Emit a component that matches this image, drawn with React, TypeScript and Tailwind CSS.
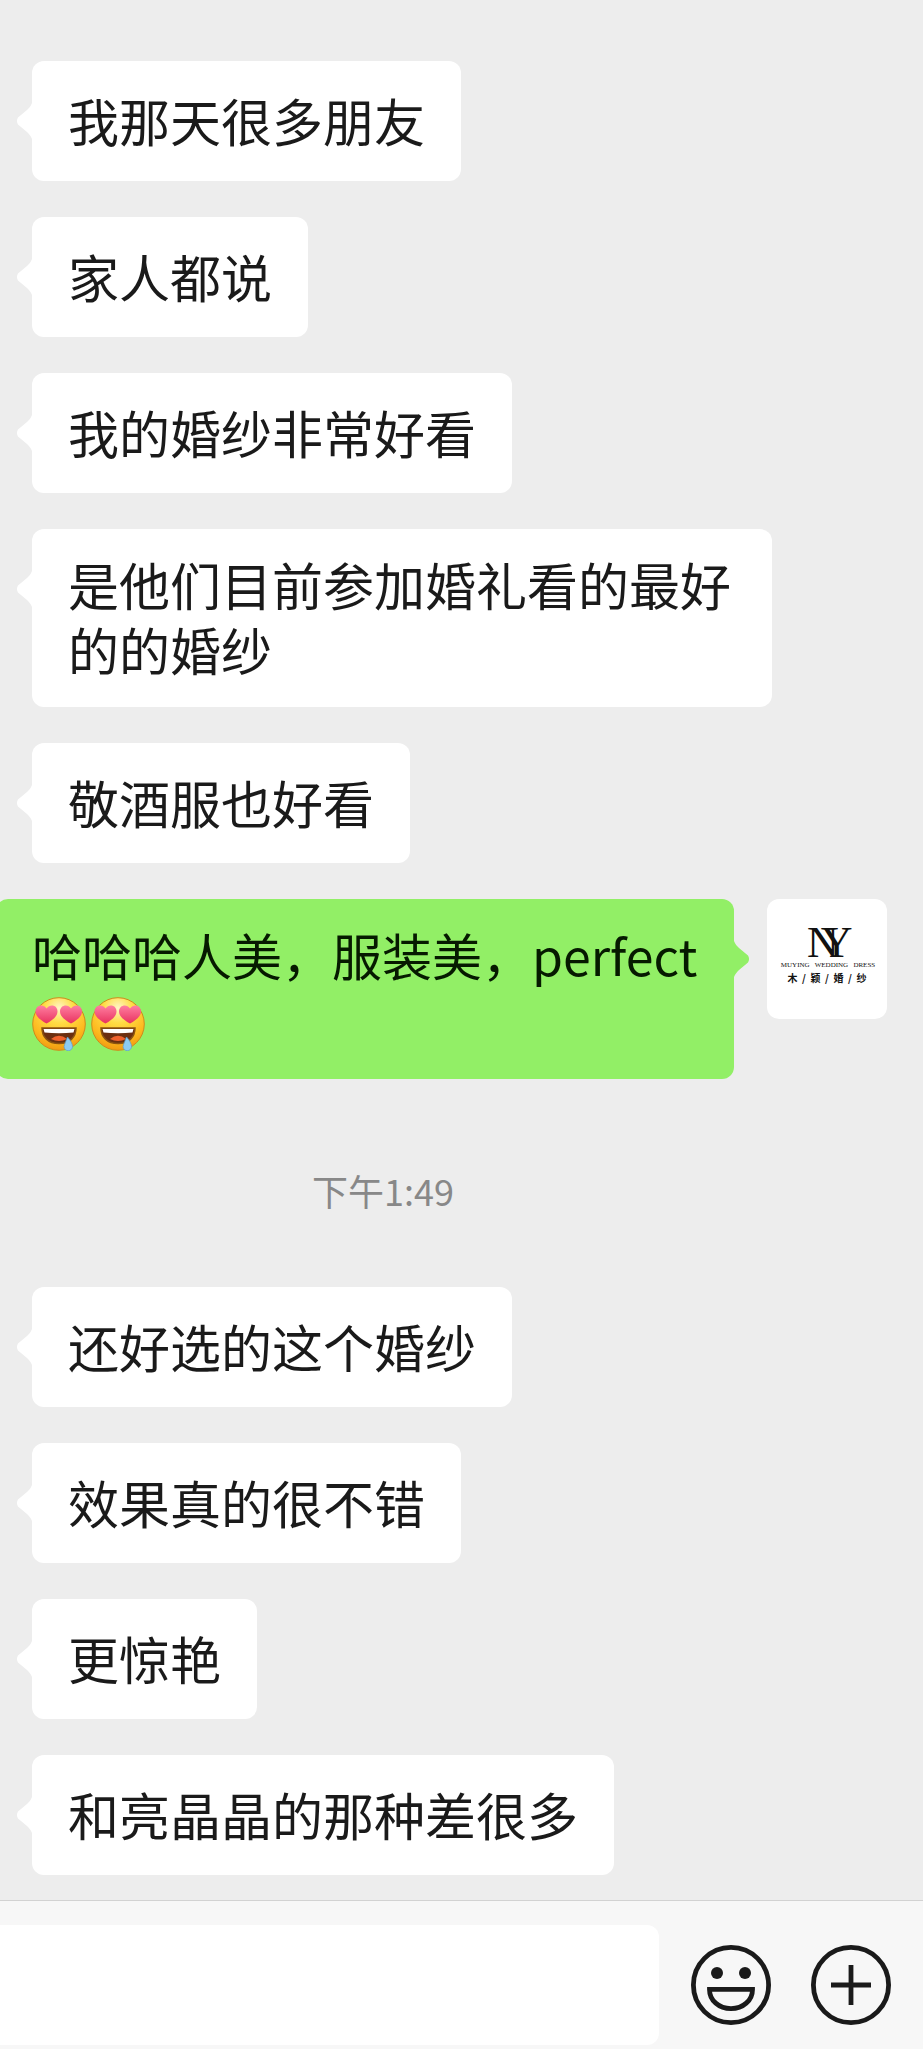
import type { ReactNode } from "react";

type Message = {
  id: number;
  text: string;
};

const morningMessages: Message[] = [
  { id: 1, text: "我那天很多朋友" },
  { id: 2, text: "家人都说" },
  { id: 3, text: "我的婚纱非常好看" },
  { id: 4, text: "是他们目前参加婚礼看的最好的的婚纱" },
  { id: 5, text: "敬酒服也好看" },
];

const afternoonMessages: Message[] = [
  { id: 6, text: "还好选的这个婚纱" },
  { id: 7, text: "效果真的很不错" },
  { id: 8, text: "更惊艳" },
  { id: 9, text: "和亮晶晶的那种差很多" },
];

const BubbleTail = ({ className }: { className: string }) => (
  <svg
    className={`absolute top-[42px] h-9 w-4 ${className}`}
    viewBox="0 0 16 36"
    fill="currentColor"
    aria-hidden="true"
  >
    <path d="M16 0C15 3 13 5 11 7L2 14.6C.6 16.6.6 19.4 2 21.4L11 29C13 31 15 33 16 36Z" />
  </svg>
);

const ReceivedMessage = ({ text }: { text: string }) => (
  <li className="flex pl-8">
    <div className="relative flex min-h-[120px] max-w-[740px] items-center rounded-xl bg-white px-9 pt-[23px] pb-[25px] text-white">
      <BubbleTail className="right-full" />
      <p className="text-[51px] leading-[65px] text-[#1a1a1a]">{text}</p>
    </div>
  </li>
);

const SentMessage = ({ children }: { children: ReactNode }) => (
  <li className="flex justify-end gap-[33px] pr-9">
    <div className="relative min-h-[120px] max-w-[738px] shrink-0 rounded-xl bg-[#92ef66] px-9 pt-[22px] pb-[26px] text-[#92ef66]">
      <BubbleTail className="left-full -scale-x-100" />
      <p className="text-[50px] leading-[66px] text-[#061a00]">{children}</p>
    </div>
    <Avatar />
  </li>
);

const Avatar = () => (
  <svg
    className="size-[120px] shrink-0 rounded-xl bg-white"
    viewBox="0 0 120 120"
    role="img"
    aria-label="木颖婚纱"
  >
    <g fontFamily="Liberation Serif, serif" fill="#111">
      <text x="40" y="58" fontSize="44">
        N<tspan dx="-18">Y</tspan>
      </text>
      <text className="whitespace-pre" x="61" y="68" fontSize="7" textAnchor="middle">
        {"MUYING   WEDDING   DRESS"}
      </text>
    </g>
    <text
      className="whitespace-pre"
      x="60"
      y="83"
      fontSize="10"
      fontWeight="700"
      textAnchor="middle"
      fontFamily="Noto Sans CJK SC, sans-serif"
      fill="#111"
    >
      {"木  /  颖  /  婚  /  纱"}
    </text>
  </svg>
);

const DroolingFace = () => (
  <svg
    className="mt-[10px] mr-[5px] inline-block size-[54px] align-top"
    viewBox="0 0 54 54"
    role="img"
    aria-label="色"
  >
    <defs>
      <radialGradient id="face" cx="50%" cy="20%" r="80%">
        <stop offset="0" stopColor="#fff6c8" />
        <stop offset="0.35" stopColor="#ffdc45" />
        <stop offset="0.75" stopColor="#fdb81e" />
        <stop offset="1" stopColor="#f09a10" />
      </radialGradient>
      <linearGradient id="heart" x1="0" y1="0" x2="0" y2="1">
        <stop offset="0" stopColor="#ff7ea0" />
        <stop offset="1" stopColor="#e8325f" />
      </linearGradient>
    </defs>
    <circle cx="27" cy="27" r="26.3" fill="url(#face)" stroke="#cf8a1c" />
    <path
      d="M14.5 26.5C9 23.5 3.5 19.5 3.5 14.5C3.5 8 11.5 6.5 14.5 11.5C18 6.5 25.5 8 25.5 14.5C25.5 19.5 20 23.5 14.5 26.5Z"
      fill="url(#heart)"
    />
    <path
      d="M39 26.5C33.5 23.5 28 19.5 28 14.5C28 8 36 6.5 39 11.5C42.5 6.5 50 8 50 14.5C50 19.5 44.5 23.5 39 26.5Z"
      fill="url(#heart)"
    />
    <path
      d="M10 31H44C44 40 38 46.5 27 46.5S10 40 10 31Z"
      fill="#6b2f10"
      stroke="#8a5410"
      strokeWidth="1.5"
    />
    <path d="M11.5 32H42.5L41.5 35.5Q27 37 12.5 35.5Z" fill="#fff" />
    <path d="M19 42Q27 35.5 35 42Q27 46 19 42Z" fill="#f0622d" />
    <path
      d="M35.5 40C38.5 43 40.5 47 40.5 49.5A4.2 4.2 0 0 1 32.1 49.5C32.5 47 34.5 43 35.5 40Z"
      fill="#8ccbf2"
      stroke="#5a9fd0"
      strokeWidth="0.7"
    />
  </svg>
);

const SmileIcon = () => (
  <svg
    className="size-20"
    viewBox="0 0 80 80"
    fill="none"
    stroke="#1a1a1a"
    strokeWidth="4.8"
    aria-hidden="true"
  >
    <circle cx="40" cy="40" r="37.6" />
    <circle cx="26" cy="28" r="6" fill="#1a1a1a" stroke="none" />
    <circle cx="54" cy="28" r="6" fill="#1a1a1a" stroke="none" />
    <path d="M18.5 44.4H61.5C61.5 55.5 52 63.6 40 63.6S18.5 55.5 18.5 44.4Z" />
  </svg>
);

const PlusIcon = () => (
  <svg
    className="size-20"
    viewBox="0 0 80 80"
    fill="none"
    stroke="#1a1a1a"
    strokeWidth="4.8"
    aria-hidden="true"
  >
    <circle cx="40" cy="40" r="37.6" />
    <path d="M40 20V60M20 40H60" />
  </svg>
);

export default function App() {
  return (
    <main className="flex min-h-screen flex-col overflow-hidden bg-[#ededed] font-['Noto_Sans_CJK_SC',sans-serif]">
      <ul className="flex flex-1 flex-col gap-9 pt-[61px] pb-[25px]">
        {morningMessages.map((message) => (
          <ReceivedMessage key={message.id} text={message.text} />
        ))}
        <SentMessage>
          哈哈哈人美，服装美，perfect
          <DroolingFace />
          <DroolingFace />
        </SentMessage>
        <li className="pt-12 pr-[157px] pb-[34px] text-center text-4xl leading-[54px] text-[#888]">
          <time dateTime="13:49">下午1:49</time>
        </li>
        {afternoonMessages.map((message) => (
          <ReceivedMessage key={message.id} text={message.text} />
        ))}
      </ul>

      <footer className="flex items-center border-t border-[#d2d2d2] bg-[#f7f7f7] pt-6 pr-8 pb-1">
        <input
          type="text"
          aria-label="消息"
          className="h-[120px] min-w-0 flex-1 rounded-r-xl bg-white px-9 text-[51px] text-[#1a1a1a] outline-none"
        />
        <button type="button" aria-label="表情" className="ml-8">
          <SmileIcon />
        </button>
        <button type="button" aria-label="更多" className="ml-10">
          <PlusIcon />
        </button>
      </footer>
    </main>
  );
}
